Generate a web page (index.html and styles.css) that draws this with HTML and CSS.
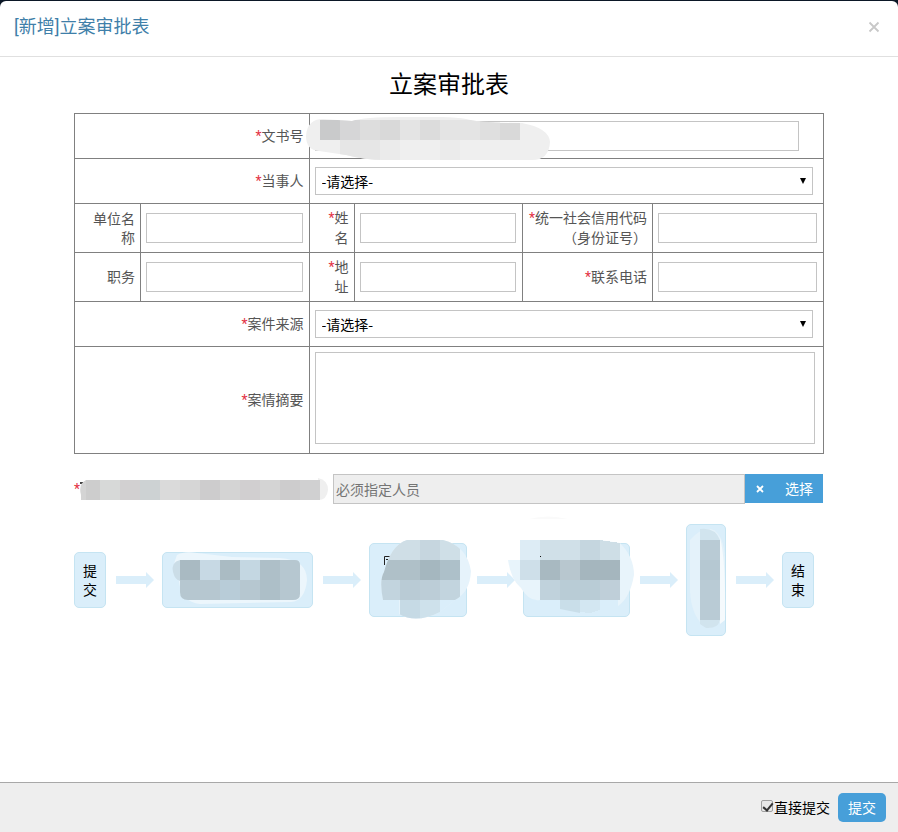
FILE: index.html
```html
<!DOCTYPE html>
<html lang="zh-CN">
<head>
<meta charset="utf-8">
<meta name="viewport" content="width=device-width, initial-scale=1">
<title>[新增]立案审批表</title>
<link rel="stylesheet" href="styles.css">
</head>
<body>
<form class="modal">
  <header class="modal-header">
    <h1 class="modal-title">[新增]立案审批表</h1>
    <button type="button" class="close" aria-label="关闭">
      <svg width="12" height="12" viewBox="0 0 12 12"><path d="M1.5 1.5 10.500 10.500M10.500 1.5 1.5 10.500" fill="none" stroke="#c8c8c8" stroke-width="1.800"/></svg>
    </button>
  </header>

  <main class="modal-body">
    <h2 class="form-title">立案审批表</h2>
    <table class="form-table">
      <colgroup>
        <col class="col-a"><col class="col-input"><col class="col-b"><col class="col-input"><col class="col-c"><col>
      </colgroup>
      <tbody>
        <tr class="row-line">
          <th colspan="2"><label for="docno"><i class="req">*</i>文书号</label></th>
          <td colspan="4">
            <div class="masked-field">
              <input id="docno" class="field field-docno" type="text">
              <svg class="docno-mask" width="246" height="44" viewBox="305 117 246 44" aria-hidden="true">
                <defs><clipPath id="docno-clip"><path d="M306 136C307 123 314 119 323 119L352 121Q364 117 400 117Q450 116 466 119Q480 123 522 123Q549 128 550 142Q549 160 532 160H385Q365 160 346 155L319 151Q306 150 306 136Z"/></clipPath></defs>
                <g clip-path="url(#docno-clip)" shape-rendering="crispEdges">
                  <path fill="#efefef" d="M305 116h246v45H305z"/>
                  <path fill="#c9cacb" d="M320 120h20v20h-20z"/>
                  <path fill="#d6d6d7" d="M340 120h20v20h-20z"/>
                  <path fill="#dddddd" d="M360 120h20v20h-20z"/>
                  <path fill="#d9d9d9" d="M380 120h20v20h-20zM500 123h20v17h-20z"/>
                  <path fill="#e4e4e4" d="M400 120h20v20h-20zM440 120h20v20h-20zM460 120h20v20h-20z"/>
                  <path fill="#dfdfdf" d="M480 122h20v18h-20z"/>
                  <path fill="#dcdcdc" d="M420 120h20v20h-20z"/>
                  <path fill="#e6e6e6" d="M340 140h40v20h-40z"/>
                  <path fill="#ebebeb" d="M380 140h20v20h-20zM440 140h20v20h-20z"/>
                </g>
              </svg>
            </div>
          </td>
        </tr>
        <tr class="row-line">
          <th colspan="2"><label for="party"><i class="req">*</i>当事人</label></th>
          <td colspan="4"><div class="select-box"><select id="party"><option>-请选择-</option></select></div></td>
        </tr>
        <tr class="row-pair">
          <th><label for="company">单位名称</label></th>
          <td><input id="company" class="field" type="text"></td>
          <th><label for="name"><i class="req">*</i>姓名</label></th>
          <td><input id="name" class="field" type="text"></td>
          <th><label for="code"><i class="req">*</i>统一社会信用代码（身份证号）</label></th>
          <td><input id="code" class="field" type="text"></td>
        </tr>
        <tr class="row-pair">
          <th><label for="duty">职务</label></th>
          <td><input id="duty" class="field" type="text"></td>
          <th><label for="address"><i class="req">*</i>地址</label></th>
          <td><input id="address" class="field" type="text"></td>
          <th><label for="phone"><i class="req">*</i>联系电话</label></th>
          <td><input id="phone" class="field" type="text"></td>
        </tr>
        <tr class="row-line">
          <th colspan="2"><label for="source"><i class="req">*</i>案件来源</label></th>
          <td colspan="4"><div class="select-box"><select id="source"><option>-请选择-</option></select></div></td>
        </tr>
        <tr class="row-text">
          <th colspan="2"><label for="summary"><i class="req">*</i>案情摘要</label></th>
          <td colspan="4"><textarea id="summary" class="summary"></textarea></td>
        </tr>
      </tbody>
    </table>

    <div class="picker">
      <label class="picker-label" for="person"><i class="req">*</i>
        <svg class="picker-mask" width="250" height="24" viewBox="79 477 250 24" aria-hidden="true">
          <path d="M80 482h3v2h-3z" fill="#444"/>
          <path d="M318 478Q328 480 328 490Q327 500 318 500Z" fill="#efefef"/>
          <path d="M86 480H320V500H81V495Q78 484 86 480Z" fill="#d4d4d4"/>
          <g shape-rendering="crispEdges">
            <path d="M86 480h14v20H86z" fill="#cdcdcd"/>
            <path d="M100 480h20v20h-20z" fill="#d7d9d8"/>
            <path d="M120 480h20v20h-20z" fill="#d2d0d1"/>
            <path d="M140 480h20v20h-20z" fill="#cdd2d3"/>
            <path d="M160 480h20v20h-20z" fill="#dadada"/>
            <path d="M180 480h20v20h-20z" fill="#d6d6d6"/>
            <path d="M200 480h20v20h-20zM280 480h20v20h-20z" fill="#cdcccd"/>
            <path d="M240 480h20v20h-20z" fill="#d1cfd0"/>
            <path d="M300 480h20v20h-20z" fill="#d0d0d1"/>
          </g>
        </svg>
      </label>
      <input id="person" class="picker-input" type="text" placeholder="必须指定人员" readonly>
      <button type="button" class="picker-clear" aria-label="清除">
        <svg width="8" height="8" viewBox="0 0 8 8"><path d="M1 1 7 7M7 1 1 7" fill="none" stroke="#fff" stroke-width="1.800"/></svg>
      </button>
      <button type="button" class="picker-choose">选择</button>
    </div>

    <div class="flow">
      <div class="node node-end">提交</div>
      <svg class="arrow" width="38" height="16" viewBox="0 0 38 16"><path d="M0 4h30V0l8 8-8 8v-4H0z"/></svg>
      <div class="node node-wide">
        <svg class="node-mask" width="151" height="56" viewBox="162 552 151 56" aria-hidden="true">
          <path d="M177 555Q184 551 197 553L232 557L280 558Q307 560 307 580Q305 601 291 602L200 604Q181 602 179 581Q170 570 177 555Z" fill="#ecf6fc"/>
          <path d="M180 560Q171 562 173 572Q175 580 180 581Z" fill="#cbdde7"/>
          <path d="M180 560H295Q300 560 300 565V594Q300 600 293 600H188Q180 600 180 592Z" fill="#b6c7d0"/>
          <g shape-rendering="crispEdges">
            <path d="M180 560h20v20h-20z" fill="#a9bac2"/>
            <path d="M200 560h20v20h-20z" fill="#c7d9e4"/>
            <path d="M220 560h20v20h-20z" fill="#aabbc3"/>
            <path d="M240 560h20v20h-20z" fill="#c4d7e2"/>
            <path d="M260 560h20v20h-20z" fill="#aebfc8"/>
            <path d="M220 580h20v20h-20z" fill="#b8ccd8"/>
            <path d="M260 580h20v20h-20z" fill="#adbfc8"/>
          </g>
        </svg>
      </div>
      <svg class="arrow" width="38" height="16" viewBox="0 0 38 16"><path d="M0 4h30V0l8 8-8 8v-4H0z"/></svg>
      <div class="node node-tall-a">
        <svg class="node-mask" width="104" height="82" viewBox="369 538 104 82" aria-hidden="true">
          <defs><clipPath id="clip-a"><path d="M407 540H443Q467 546 471 571Q470 592 455 600L440 612Q416 624 399 614V600H383Q379 580 384 572Q391 545 407 540Z"/></clipPath></defs>
          <path d="M384.500 565V556.500H390M386 559.500h2" fill="none" stroke="#222"/>
          <g clip-path="url(#clip-a)" shape-rendering="crispEdges">
            <path d="M369 538h104v82H369z" fill="#e6f3fb"/>
            <path d="M380 540h60v20h-60z" fill="#cfdee6"/>
            <path d="M420 540h20v20h-20z" fill="#c6d6df"/>
            <path d="M440 540h20v20h-20z" fill="#cfdfe7"/>
            <path d="M380 560h40v20h-40z" fill="#afc0c8"/>
            <path d="M420 560h20v20h-20z" fill="#a5b7bf"/>
            <path d="M440 560h20v20h-20z" fill="#adc0c9"/>
            <path d="M380 580h80v20h-80z" fill="#c2d4de"/>
            <path d="M400 580h20v20h-20z" fill="#b9cbd5"/>
            <path d="M420 580h20v20h-20z" fill="#bccdd7"/>
            <path d="M400 600h20v20h-20z" fill="#c6dae5"/>
            <path d="M420 600h20v20h-20z" fill="#cee1eb"/>
            <path d="M440 600h20v20h-20z" fill="#daeefa"/>
          </g>
        </svg>
      </div>
      <svg class="arrow" width="38" height="16" viewBox="0 0 38 16"><path d="M0 4h30V0l8 8-8 8v-4H0z"/></svg>
      <div class="node node-tall-b">
        <svg class="node-mask" width="128" height="104" viewBox="508 516 128 104" aria-hidden="true">
          <path d="M529 519Q548 514 568 519Z" fill="#fafafa"/>
          <path d="M508 560H520V540H600L620 543Q634 557 634 575Q630 598 618 606V600H540Q529 602 521 588Q511 580 508 560Z" fill="#e8f4fb"/>
          <g shape-rendering="crispEdges">
            <path d="M520 540h20v20h-20z" fill="#ddecf5"/>
            <path d="M540 540h40v20h-40z" fill="#d0e0e8"/>
            <path d="M580 540h20v20h-20z" fill="#c5d6df"/>
            <path d="M600 540 620 543V560H600z" fill="#cedee6"/>
            <path d="M520 560h20v20h-20z" fill="#cedfe9"/>
            <path d="M540 560h20v20h-20z" fill="#a8b9c1"/>
            <path d="M560 560h20v20h-20z" fill="#b8c7cf"/>
            <path d="M580 560h40v20h-40z" fill="#a5b6be"/>
            <path d="M540 580h20v20h-20z" fill="#c0d2dc"/>
            <path d="M560 580h40v20h-40z" fill="#b9ccd6"/>
            <path d="M600 580h20v20h-20z" fill="#bfcfd9"/>
            <path d="M580 600h20v10l-10 3-10-1z" fill="#d3e7f2"/>
          </g>
          <path d="M560 600h20v13l-20-4z" fill="#c9dee9"/>
          <path d="M540 556.500h1" stroke="#111"/>
        </svg>
      </div>
      <svg class="arrow" width="38" height="16" viewBox="0 0 38 16"><path d="M0 4h30V0l8 8-8 8v-4H0z"/></svg>
      <div class="node node-narrow">
        <svg class="node-mask" width="40" height="112" viewBox="686 524 40 112" aria-hidden="true">
          <path d="M690 540Q700 528 711 529Q724 533 725 560V613Q718 628 707 628Q691 618 690 590Z" fill="#e4f2fa"/>
          <path d="M720 538Q726 560 725 620L720 624Z" fill="#f5fafd"/>
          <path d="M700 540V529Q715 527 720 540ZM700 620H720Q718 629 706 628L700 624Z" fill="#d1e4ee"/>
          <path d="M700 540h20v80h-20z" fill="#b9cbd5"/>
          <path d="M700 560h20v20h-20z" fill="#b5c8d2"/>
        </svg>
      </div>
      <svg class="arrow" width="38" height="16" viewBox="0 0 38 16"><path d="M0 4h30V0l8 8-8 8v-4H0z"/></svg>
      <div class="node node-end">结束</div>
    </div>
  </main>

  <footer class="modal-footer">
    <label class="direct"><input type="checkbox" checked>直接提交</label>
    <button type="submit" class="submit">提交</button>
  </footer>
</form>
</body>
</html>
```
FILE: styles.css
```css
* {
  box-sizing: border-box;
}

body {
  margin: 0;
  padding-top: 1px;
  background: #0b1726;
  color: #000;
  font: 14px/19px "Noto Sans CJK SC", sans-serif;
  text-spacing-trim: space-all;
}

button,
input,
select,
textarea {
  margin: 0;
  border-radius: 0;
  font: inherit;
}

.modal {
  display: flex;
  flex-direction: column;
  min-height: calc(100vh - 1px);
  border-radius: 6px 6px 0 0;
  background: #fff;
}

.modal-header {
  display: flex;
  align-items: center;
  justify-content: space-between;
  height: 56px;
  padding: 0 18px 4px 14px;
  border-bottom: 1px solid #e0e0e0;
}

.modal-title {
  margin: 0;
  color: #3f7fa9;
  font-family: Roboto, "Noto Sans CJK SC", sans-serif;
  font-size: 18px;
  font-weight: 400;
  line-height: 24px;
}

.close {
  display: flex;
  padding: 0;
  border: 0;
  background: none;
}

.modal-body {
  flex: 1;
  padding: 8px 74px 0;
}

.form-title {
  margin: 0;
  font-size: 24px;
  font-weight: 400;
  line-height: 36px;
  text-align: center;
}

.form-table {
  width: 100%;
  margin-top: 12px;
  border-collapse: collapse;
  table-layout: fixed;
}

.col-a {
  width: 66px;
}

.col-b {
  width: 45px;
}

.col-c {
  width: 130px;
}

.col-input {
  width: 22.5%;
}

.form-table th,
.form-table td {
  padding: 0 5px;
  border: 1px solid #808080;
  vertical-align: middle;
}

.form-table th {
  padding-bottom: 1px;
  color: #555;
  font-weight: 400;
  text-align: right;
}

.req {
  color: #e33244;
  font-family: Roboto, sans-serif;
  font-style: normal;
}

.row-line {
  height: 45px;
}

.row-pair {
  height: 49px;
}

.row-text {
  height: 107px;
}

.field {
  display: block;
  width: calc(100% - 1px);
  height: 30px;
  padding: 0 6px;
  border: 1px solid #c4c4c4;
  background: #fff;
}

.field-docno {
  width: calc(100% - 19px);
}

.masked-field {
  position: relative;
}

.docno-mask {
  position: absolute;
  top: -4px;
  left: -10px;
}

.select-box {
  position: relative;
  width: calc(100% - 5px);
}

.select-box select {
  display: block;
  width: 100%;
  height: 28px;
  padding: 0 24px 0 6px;
  border: 1px solid #c4c4c4;
  background: #fff;
  color: #000;
  appearance: none;
}

.select-box::after {
  position: absolute;
  top: 11px;
  right: 7px;
  border: 3px solid transparent;
  border-top: 6px solid #000;
  border-bottom: 0;
  content: "";
}

.summary {
  display: block;
  width: calc(100% - 3px);
  height: 92px;
  margin-bottom: 4px;
  padding: 4px 6px;
  border: 1px solid #c4c4c4;
  background: #fff;
  resize: none;
}

.picker {
  display: flex;
  height: 30px;
  margin-top: 20px;
  padding-right: 1px;
}

.picker-label {
  position: relative;
  display: flex;
  align-items: center;
  width: 259px;
}

.picker-mask {
  position: absolute;
  top: 3px;
  left: 5px;
}

.picker-input {
  flex: 1;
  min-width: 0;
  padding: 0 2px;
  border: 1px solid #c4c4c4;
  background: #eee;
}

.picker-input::placeholder {
  color: #757575;
  opacity: 1;
}

.picker-clear,
.picker-choose {
  display: flex;
  align-items: center;
  justify-content: center;
  height: 29px;
  padding: 0;
  border: 0;
  background: #479fd9;
  color: #fff;
}

.picker-clear {
  width: 30px;
}

.picker-choose {
  width: 48px;
}

.flow {
  display: flex;
  align-items: center;
  margin-top: 20px;
}

.node {
  position: relative;
  flex: none;
  border: 1px solid #c5e4f2;
  border-radius: 5px;
  background: #daeefa;
}

.node-end {
  width: 32px;
  height: 56px;
  padding: 8px;
}

.node-wide {
  width: 151px;
  height: 56px;
}

.node-tall-a {
  width: 98px;
  height: 74px;
}

.node-tall-b {
  width: 107px;
  height: 74px;
}

.node-narrow {
  width: 40px;
  height: 112px;
}

.node-mask {
  position: absolute;
  top: -1px;
  left: -1px;
}

.node-tall-a .node-mask {
  top: -6px;
}

.node-tall-b .node-mask {
  top: -28px;
  left: -16px;
}

.arrow {
  flex: none;
  margin: 0 8px 0 10px;
  fill: #daeefa;
}

.modal-footer {
  display: flex;
  align-items: center;
  justify-content: flex-end;
  gap: 8px;
  height: 50px;
  padding: 0 12px;
  border-top: 1px solid #a8a8a8;
  background: #eee;
}

.direct {
  display: flex;
  align-items: center;
  gap: 1px;
}

.direct input {
  position: relative;
  width: 12px;
  height: 12px;
  margin-bottom: 3px;
  border: 1px solid #a0a0a0;
  border-radius: 2px;
  background: #e8e8e8;
  appearance: none;
}

.direct input:checked::after {
  position: absolute;
  top: 0;
  left: 3px;
  width: 4px;
  height: 8px;
  border: solid #333;
  border-width: 0 2px 2px 0;
  content: "";
  transform: rotate(40deg);
}

.submit {
  width: 48px;
  height: 29px;
  padding: 0;
  border: 0;
  border-radius: 5px;
  background: #479fd9;
  color: #fff;
}
```
